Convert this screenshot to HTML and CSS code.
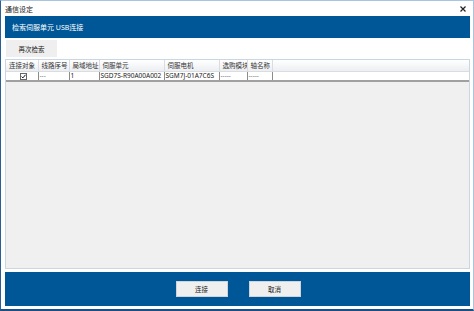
FILE: index.html
```html
<!DOCTYPE html>
<html lang="zh-CN">
<head>
    <meta charset="UTF-8">
    <title>通信设定</title>
    <link rel="stylesheet" href="styles.css">
</head>
<body>

    <div class="window">
        <div class="titlebar">
            <span class="title">通信设定</span>
            <svg class="close" width="6" height="6" viewBox="0 0 6 6">
                <path d="M0.5 0.5 L5.5 5.5 M5.5 0.5 L0.5 5.5" stroke="#222" stroke-width="1.2"/>
            </svg>
        </div>

        <div class="banner">检索伺服单元 USB连接</div>

        <div class="toolbar">
            <button class="btn search-btn">再次检索</button>
        </div>

        <!-- Device list -->
        <div class="grid">
            <table class="device-table">
                <colgroup>
                    <col style="width:32px">
                    <col style="width:31px">
                    <col style="width:30px">
                    <col style="width:65px">
                    <col style="width:55px">
                    <col style="width:28px">
                    <col style="width:25px">
                    <col>
                </colgroup>
                <thead>
                    <tr>
                        <th>连接对象</th>
                        <th>线路序号</th>
                        <th>局域地址</th>
                        <th>伺服单元</th>
                        <th>伺服电机</th>
                        <th>选购模块</th>
                        <th>轴名称</th>
                        <th class="filler"></th>
                    </tr>
                </thead>
                <tbody>
                    <tr>
                        <td class="check-cell">
                            <svg width="7" height="7" viewBox="0 0 7 7">
                                <rect x="0.5" y="0.5" width="6" height="6" fill="#fff" stroke="#666"/>
                                <path d="M1.6 3.6 L2.9 4.9 L5.5 1.8" fill="none" stroke="#111" stroke-width="1"/>
                            </svg>
                        </td>
                        <td class="dim">---</td>
                        <td>1</td>
                        <td>SGD7S-R90A00A002</td>
                        <td>SGM7J-01A7C6S</td>
                        <td class="dim">-----</td>
                        <td class="dim">-----</td>
                        <td class="filler"></td>
                    </tr>
                </tbody>
            </table>
        </div>

        <div class="footer">
            <button class="btn footer-btn">连接</button>
            <button class="btn footer-btn">取消</button>
        </div>
    </div>

</body>
</html>
```

FILE: styles.css
```css
html, body {
    margin: 0;
    padding: 0;
    background: #ffffff;
}

body {
    font-family: "Noto Sans", "Noto Sans CJK SC", sans-serif;
    width: 474px;
    height: 311px;
    overflow: hidden;
}

.window {
    box-sizing: border-box;
    width: 474px;
    height: 311px;
    border: 1px solid #a9c4de;
    border-left-color: #2a5f95;
    border-bottom: 2px solid #174f86;
    padding: 0 3px 0 4px;
    display: flex;
    flex-direction: column;
    background: #ffffff;
}

/* Title bar */
.titlebar {
    height: 15px;
    display: flex;
    align-items: center;
    justify-content: space-between;
    padding: 0 4px 0 0;
}

.title {
    font-size: 7px;
    color: #222;
}

.close {
    display: block;
}

/* Blue header */
.banner {
    height: 22px;
    background: #005797;
    color: #ffffff;
    font-size: 7px;
    display: flex;
    align-items: center;
    padding-left: 7px;
}

.toolbar {
    margin-top: 2px;
    height: 17px;
    padding-left: 1px;
    display: flex;
}

.btn {
    font-family: inherit;
    font-size: 6.5px;
    color: #222;
    background: #efefef;
    border: 1px solid #e1e1e1;
    padding: 0;
    margin: 0;
    cursor: pointer;
}

.search-btn {
    width: 51px;
    height: 17px;
    border-color: #efefef;
}

/* Grid */
.grid {
    margin-top: 2px;
    height: 210px;
    box-sizing: border-box;
    border: 1px solid #c9d6e4;
    background: #f0f0f0;
}

.device-table {
    width: 100%;
    table-layout: fixed;
    border-collapse: collapse;
    font-size: 6.5px;
    color: #222;
}

.device-table th {
    height: 11px;
    padding: 0 0 0 3px;
    font-weight: normal;
    text-align: left;
    white-space: nowrap;
    overflow: hidden;
    color: #333;
    background: linear-gradient(#ffffff, #eceef1);
    border-right: 1px solid #d9dde2;
    border-bottom: 1px solid #d9dde2;
    line-height: 11px;
}

.device-table td {
    height: 8px;
    padding: 0 0 0 1px;
    white-space: nowrap;
    overflow: hidden;
    background: #ffffff;
    border-right: 1px solid #8c8c8c;
    border-bottom: 2px solid #a0a0a0;
    line-height: 8px;
}

.device-table .filler {
    border-right: none;
}

.device-table .check-cell {
    padding: 0 0 0 4px;
}

.check-cell svg {
    display: block;
    margin: 0 auto;
}

.dim {
    color: #777;
}

/* Bottom panel */
.footer {
    margin-top: 3px;
    height: 34px;
    background: #005797;
    display: flex;
    justify-content: center;
    align-items: center;
    gap: 20px;
}

.footer-btn {
    width: 52px;
    height: 16px;
    border-color: #d0d4da;
    margin-left: 1px;
}
```
